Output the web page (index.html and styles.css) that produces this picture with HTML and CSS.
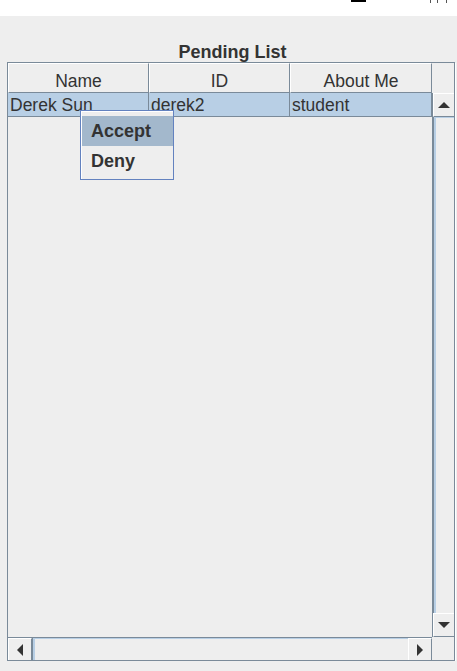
FILE: index.html
```html
<!DOCTYPE html>
<html lang="en">
<head>
    <meta charset="UTF-8">
    <meta name="viewport" content="width=device-width, initial-scale=1.0">
    <title>Pending List</title>

    <link rel="stylesheet" href="styles.css">
</head>
<body>
    <div class="titlebar">
        <span class="min-mark"></span>
        <span class="max-mark"></span>
        <span class="max-mark mark-2"></span>
        <span class="max-mark mark-3"></span>
    </div>

    <h3 class="title">Pending List</h3>

    <div class="table-frame">
        <div class="table-main">
            <div class="table-header">
                <div class="header-cell col-1">Name</div>
                <div class="header-cell col-2">ID</div>
                <div class="header-cell col-3">About Me</div>
            </div>

            <div class="viewport">
                <div class="table-row selected">
                    <div class="cell col-1">Derek Sun</div>
                    <div class="cell col-2">derek2</div>
                    <div class="cell col-3">student</div>
                </div>
            </div>

            <div class="hbar">
                <div class="scroll-btn"><span class="arrow arrow-left"></span></div>
                <div class="hbar-track"><div class="thumb"></div></div>
                <div class="scroll-btn"><span class="arrow arrow-right"></span></div>
            </div>
        </div>

        <div class="table-side">
            <div class="corner-top"></div>
            <div class="vbar">
                <div class="scroll-btn"><span class="arrow arrow-up"></span></div>
                <div class="vbar-track"><div class="thumb"></div></div>
                <div class="scroll-btn"><span class="arrow arrow-down"></span></div>
            </div>
            <div class="corner-bottom"></div>
        </div>
    </div>

    <ul class="popup-menu">
        <li class="menu-item active">Accept</li>
        <li class="menu-item">Deny</li>
    </ul>
</body>
</html>
```

FILE: styles.css
```css
body {
    margin: 0;
    background-color: #eeeeee;
    font-family: "Liberation Sans", Arial, sans-serif;
    color: #333333;
}

/* bit of the window title bar left at the top */
.titlebar {
    height: 16px;
    background-color: white;
    display: flex;
    align-items: flex-start;
}

.min-mark {
    margin-left: 351px;
    width: 15px;
    height: 2px;
    background-color: black;
}

.max-mark {
    margin-left: 64px;
    width: 1px;
    height: 3px;
    background-color: #555555;
}

.mark-2 {
    margin-left: 6px;
}

.mark-3 {
    margin-left: 8px;
}

.title {
    margin: 0;
    height: 46px;
    padding-left: 8px;
    display: flex;
    align-items: flex-end;
    justify-content: center;
    font-size: 18px;
    line-height: 20px;
    font-weight: bold;
}

.table-frame {
    margin-left: 7px;
    width: 448px;
    height: 599px;
    box-sizing: border-box;
    border: 1px solid #7a8a99;
    box-shadow: 1px 1px 0 white;
    display: flex;
}

.table-main {
    width: 424px;
    display: flex;
    flex-direction: column;
}

.table-header {
    display: flex;
    height: 30px;
}

.header-cell {
    box-sizing: border-box;
    border-top: 1px solid white;
    border-left: 1px solid white;
    border-right: 1px solid #7a8a99;
    border-bottom: 1px solid #7a8a99;
    padding-top: 6px;
    text-align: center;
    font-size: 17.5px;
    line-height: 22px;
}

.col-1 {
    width: 141px;
}

.col-2 {
    width: 141px;
}

.col-3 {
    width: 142px;
}

.viewport {
    flex: 1;
}

.table-row {
    display: flex;
    height: 24px;
    box-sizing: border-box;
    border-bottom: 1px solid #7a8a99;
}

.selected {
    background-color: #b8cfe5;
}

.cell {
    box-sizing: border-box;
    padding-left: 2px;
    padding-top: 2px;
    border-right: 1px solid #7a8a99;
    font-size: 17.5px;
    line-height: 21px;
    white-space: nowrap;
    overflow: hidden;
}

/* scroll bars */
.hbar {
    height: 23px;
    box-sizing: border-box;
    border-top: 1px solid #7a8a99;
    display: flex;
}

.scroll-btn {
    width: 24px;
    box-sizing: border-box;
    background-color: #eeeeee;
    border-top: 1px solid white;
    border-left: 1px solid white;
    border-right: 1px solid #7a8a99;
    display: flex;
    align-items: center;
    justify-content: center;
}

.hbar-track {
    flex: 1;
    border-left: 1px solid #7a8a99;
}

.thumb {
    height: 100%;
    box-sizing: border-box;
    border-top: 1px solid #b8cfe5;
    border-left: 2px solid #b8cfe5;
}

.table-side {
    width: 22px;
    display: flex;
    flex-direction: column;
}

.corner-top {
    height: 30px;
}

.corner-bottom {
    height: 23px;
}

.vbar {
    flex: 1;
    display: flex;
    flex-direction: column;
    border-left: 1px solid #7a8a99;
}

.vbar .scroll-btn {
    width: auto;
    height: 24px;
    border-right: none;
    border-bottom: 1px solid #7a8a99;
}

.vbar-track {
    flex: 1;
    border-left: 1px solid #7a8a99;
}

.arrow {
    width: 0;
    height: 0;
}

.arrow-up {
    border-left: 6px solid transparent;
    border-right: 6px solid transparent;
    border-bottom: 6px solid #333333;
}

.arrow-down {
    border-left: 6px solid transparent;
    border-right: 6px solid transparent;
    border-top: 6px solid #333333;
}

.arrow-left {
    border-top: 6px solid transparent;
    border-bottom: 6px solid transparent;
    border-right: 6px solid #333333;
}

.arrow-right {
    border-top: 6px solid transparent;
    border-bottom: 6px solid transparent;
    border-left: 6px solid #333333;
}

/* right-click menu over the table */
.popup-menu {
    position: absolute;
    left: 80px;
    top: 110px;
    width: 94px;
    box-sizing: border-box;
    margin: 0;
    padding: 5px 0 3px 1px;
    list-style-type: none;
    background-color: #eeeeee;
    border: 1px solid #6382bf;
    box-shadow: inset 1px 1px 0 white;
}

.menu-item {
    height: 30px;
    box-sizing: border-box;
    padding-left: 9px;
    padding-top: 1px;
    font-size: 18px;
    line-height: 29px;
    font-weight: bold;
}

.active {
    background-color: #a3b8cc;
}
```
